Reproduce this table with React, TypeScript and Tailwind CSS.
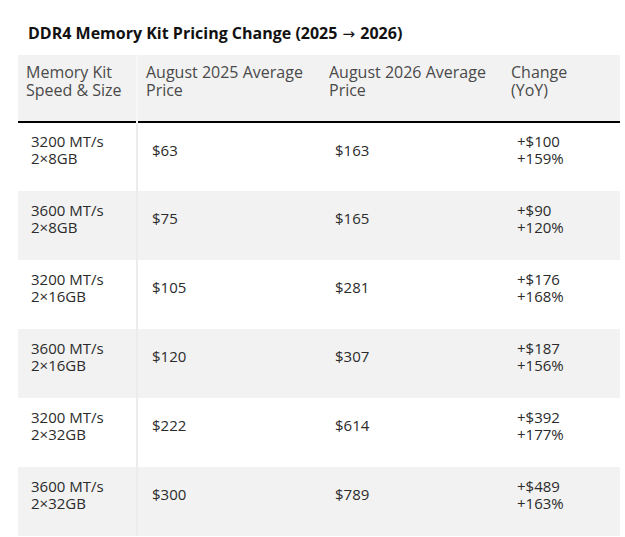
const rows = [
  { kit: ["3200 MT/s", "2×8GB"], aug25: "$63", aug26: "$163", change: ["+$100", "+159%"] },
  { kit: ["3600 MT/s", "2×8GB"], aug25: "$75", aug26: "$165", change: ["+$90", "+120%"] },
  { kit: ["3200 MT/s", "2×16GB"], aug25: "$105", aug26: "$281", change: ["+$176", "+168%"] },
  { kit: ["3600 MT/s", "2×16GB"], aug25: "$120", aug26: "$307", change: ["+$187", "+156%"] },
  { kit: ["3200 MT/s", "2×32GB"], aug25: "$222", aug26: "$614", change: ["+$392", "+177%"] },
  { kit: ["3600 MT/s", "2×32GB"], aug25: "$300", aug26: "$789", change: ["+$489", "+163%"] },
];

export default function App() {
  return (
    <div className="h-[537px] w-[625px] overflow-hidden bg-white pl-[18px] pt-[22px] font-['Open_Sans',sans-serif]">
      <h2 className="h-[22px] pl-[10px] text-[16px] font-bold leading-[22px] text-[#111]">
        DDR4 Memory Kit Pricing Change (2025{" "}
        <span className="px-[1px] font-['DejaVu_Sans',sans-serif] text-[15px] leading-none font-normal">→</span> 2026)
      </h2>
      <table className="mt-[11px] w-[602px] table-fixed border-collapse">
        <colgroup>
          <col className="w-[119px]" />
          <col className="w-[184px]" />
          <col className="w-[182px]" />
          <col className="w-[117px]" />
        </colgroup>
        <thead>
          <tr className="h-[67px] border-b-2 border-black bg-[#f2f2f2] text-left align-middle text-[16px] font-normal leading-[18px] text-[#4a4a4a]">
            <th className="border-r-2 border-[#f7f7f7] pb-[14px] pl-[8px] pr-1 font-normal">Memory Kit Speed &amp; Size</th>
            <th className="pb-[14px] pl-[8px] pr-1 font-normal">August 2025 Average Price</th>
            <th className="pb-[14px] pl-[8px] pr-1 font-normal">August 2026 Average Price</th>
            <th className="pb-[14px] pl-[8px] pr-1 font-normal">
              Change
              <br />
              (YoY)
            </th>
          </tr>
        </thead>
        <tbody className="text-[15px] leading-[17px] text-[#2b2b2b]">
          {rows.map((r, i) => (
            <tr key={i} className={i % 2 === 1 ? "h-[69px] bg-[#f2f2f2]" : "h-[69px] bg-white"}>
              <td className="border-r-2 border-[#ececec] pb-[14px] pl-[13px] align-middle">
                {r.kit[0]}
                <br />
                {r.kit[1]}
              </td>
              <td className="pb-[14px] pl-[14px] align-middle">{r.aug25}</td>
              <td className="pb-[14px] pl-[14px] align-middle">{r.aug26}</td>
              <td className="pb-[14px] pl-[14px] align-middle">
                {r.change[0]}
                <br />
                {r.change[1]}
              </td>
            </tr>
          ))}
        </tbody>
      </table>
    </div>
  );
}
